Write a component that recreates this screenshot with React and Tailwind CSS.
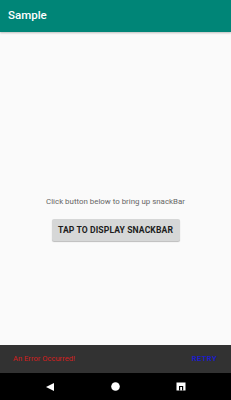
import React from 'react';

const App = () => {
    return (
        <div className="w-[231px] h-[400px] flex flex-col bg-[#fafafa] font-['Roboto',sans-serif] overflow-hidden">
            <div className="h-[32px] shrink-0 bg-[#008577] flex items-center pl-[8px] shadow-[0_1px_2px_rgba(0,0,0,0.25)] z-10">
                <span className="text-white text-[11.5px] font-medium">Sample</span>
            </div>
            <div className="h-[313px] shrink-0 flex flex-col items-center pt-[165px]">
                <p className="text-[7.9px] leading-[10px] text-[#666666]">Click button below to bring up snackBar</p>
                <button className="mt-[12px] w-[128px] h-[22px] bg-[#d6d7d7] rounded-[2px] shadow-[0_1px_1px_rgba(0,0,0,0.25)] text-[8.6px] font-bold text-[#1d1d1d] tracking-[0.1px]">
                    TAP TO DISPLAY SNACKBAR
                </button>
            </div>
            <div className="h-[28px] shrink-0 bg-[#323232] flex items-center justify-between pl-[13px] pr-[14px]">
                <span className="text-[7.6px] text-[#d21f1f]">An Error Occurred!</span>
                <span className="text-[7.6px] font-bold text-[#1c1cc8] tracking-[0.4px]">RETRY</span>
            </div>
            <div className="h-[27px] shrink-0 bg-black flex items-center justify-between px-[45px]">
                <svg width="10" height="10" viewBox="0 0 10 10">
                    <polygon points="9,1 9,9 1,5" fill="#fff" />
                </svg>
                <svg width="9" height="9" viewBox="0 0 9 9">
                    <circle cx="4.5" cy="4.5" r="4.3" fill="#fff" />
                </svg>
                <svg width="10" height="9" viewBox="0 0 10 9">
                    <rect x="0.5" y="0.5" width="9" height="8" fill="#fff" />
                    <rect x="3" y="5" width="1.2" height="3.5" fill="#000" />
                    <rect x="6" y="5" width="1.2" height="3.5" fill="#000" />
                    <rect x="3" y="4" width="4.2" height="1" fill="#000" />
                </svg>
            </div>
        </div>
    );
};

export default App;
